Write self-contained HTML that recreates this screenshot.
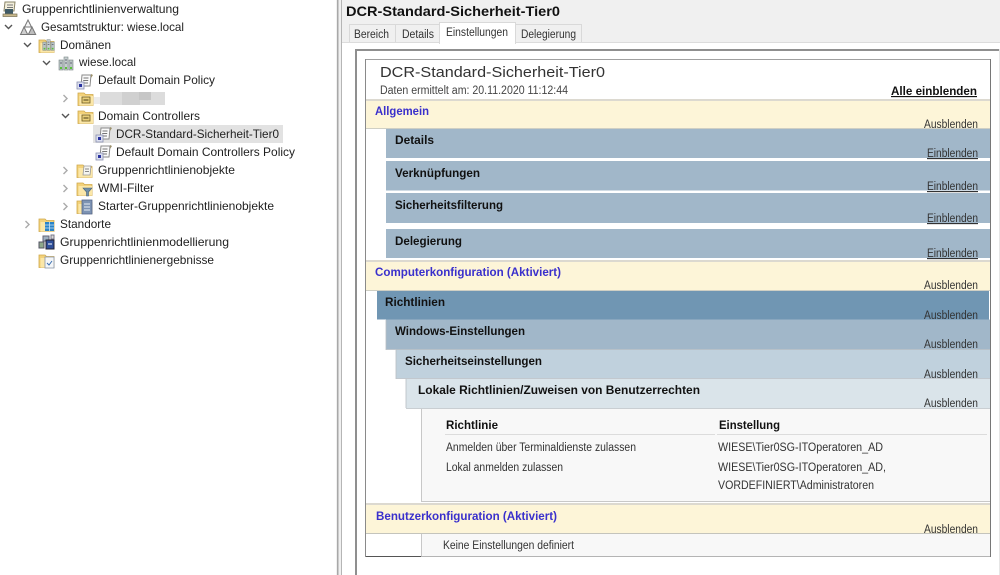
<!DOCTYPE html>
<html lang="de"><head><meta charset="utf-8"><title>Gruppenrichtlinienverwaltung</title>
<style>
html,body{margin:0;padding:0;background:#fff;width:1000px;height:575px;overflow:hidden}
svg{display:block;filter:blur(.3px)}
text{font-family:"Liberation Sans",sans-serif;font-size:12px;fill:#222;white-space:pre}
.t{font-size:12px;fill:#1f1f1f}
.b{font-weight:bold;fill:#111}
.h{font-weight:bold;fill:#3a30cc}
.s{font-size:11.5px;fill:#333}
.ch{fill:none;stroke-width:1.4}
</style></head><body>
<svg width="1000" height="575" viewBox="0 0 1000 575" xmlns="http://www.w3.org/2000/svg">
<defs>
<g id="folder"><path d="M0 3h6l1.500 1.500H15v11H0z" fill="#f3d27a" stroke="#cfa84a" stroke-width=".8"/><path d="M1.500 6H15v9.500H1.500z" fill="#fbe7a8"/></g>
<g id="gpo"><path d="M5 2h9l-1 11H4z" fill="#fafafa" stroke="#8a8a8a" stroke-width="1"/><path d="M6.500 5h5M6.200 7.500h5M6 10h5" stroke="#777" stroke-width="1"/><path d="M14 1l2 1-2 3z" fill="#9a8f6a"/><rect x="0" y="9" width="7" height="7" fill="#dcdff0" stroke="#8a90b0" stroke-width=".8"/><rect x="2" y="11" width="3" height="3" fill="#2a34a0"/></g>
<g id="ou"><use href="#folder"/><rect x="4" y="7" width="8" height="6" fill="#e9cf7a" stroke="#6c5a20" stroke-width=".8"/><path d="M5.500 10h5" stroke="#4a3f18"/></g>
<g id="srv"><rect x="1" y="5" width="4" height="10" fill="#b9c4c4" stroke="#7a8686" stroke-width=".6"/><rect x="6" y="2" width="4" height="13" fill="#c6cfcf" stroke="#7a8686" stroke-width=".6"/><rect x="11" y="5" width="4" height="10" fill="#b9c4c4" stroke="#7a8686" stroke-width=".6"/><path d="M2 8h2M7 5h2M12 8h2M7 8h2" stroke="#667"/><rect x="2" y="12" width="2" height="2" fill="#5bbf3a"/><rect x="7" y="12" width="2" height="2" fill="#5bbf3a"/><rect x="12" y="12" width="2" height="2" fill="#5bbf3a"/></g>
</defs>

<rect width="1000" height="575" fill="#fff"/>
<!-- divider -->
<rect x="336" y="0" width="6" height="575" fill="#f0f0f0"/>
<rect x="337" y="0" width="1.500" height="575" fill="#a8a8a8"/>
<rect x="341" y="0" width="1" height="575" fill="#b5b5b5"/>

<!-- tree selection -->
<rect x="93" y="125" width="190" height="18" fill="#e2e2e2"/>
<!-- blurred label -->
<rect x="94" y="97" width="8" height="7" fill="#ececec"/>
<rect x="100" y="92" width="65" height="13" fill="#dcdcdc"/>
<rect x="122" y="92" width="18" height="13" fill="#d0d0d0"/>
<rect x="139" y="92" width="12" height="8" fill="#c6c6c6"/>

<!-- chevrons -->
<g class="ch" stroke="#555">
<path class="ch" d="M5 25l3.500 3.500L12 25M24 43l3.500 3.500L31 43M43 61l3.500 3.500L50 61M62 114l3.500 3.500L69 114" stroke="#555"/>
<path class="ch" d="M63.500 95l3.500 3.500-3.500 3.500M63.500 167l3.500 3.500-3.500 3.500M63.500 185l3.500 3.500-3.500 3.500M63.500 203l3.500 3.500-3.500 3.500M25.500 221l3.500 3.500-3.500 3.500" stroke="#aaa"/>
</g>

<!-- tree icons -->
<g transform="translate(2,1)"><path d="M3 1h10l-1 9H2z" fill="#f3efdc" stroke="#8a8468"/><path d="M5 4h6M5 6.500h6" stroke="#777"/><rect x="3" y="8" width="8" height="5" fill="#3f5a66"/><path d="M1 13h14v2.500H1z" fill="#c9b98c" stroke="#7c7458" stroke-width=".7"/></g>
<g transform="translate(20,19)" fill="#cfcfcf" stroke="#777" stroke-width="1"><path d="M8 1l3.500 7h-7z" fill="#f4f4f4"/><path d="M4 8l3.700 7.500H.5z"/><path d="M12 8l3.700 7.500H8.300z" fill="#bdbdbd"/></g>
<g transform="translate(39,37)"><use href="#folder"/><g transform="translate(3,1) scale(.82)"><use href="#srv"/></g></g>
<g transform="translate(58,55)"><use href="#srv"/></g>
<use href="#gpo" x="77" y="73"/>
<use href="#ou" x="78" y="90"/>
<use href="#ou" x="78" y="108"/>
<use href="#gpo" x="96" y="126"/>
<use href="#gpo" x="96" y="144"/>
<g transform="translate(77,162)"><use href="#folder"/><path d="M7 4h7l-1 9H6z" fill="#f5f5f0" stroke="#999" stroke-width=".8"/><path d="M8 7h4M8 9.500h4" stroke="#888"/></g>
<g transform="translate(77,180)"><use href="#folder"/><path d="M6 8h9l-3.500 4v4h-2v-4z" fill="#6f8fa8" stroke="#4a6478" stroke-width=".6"/></g>
<g transform="translate(77,198)"><use href="#folder"/><rect x="5" y="2" width="10" height="14" fill="#7d93b3" stroke="#56678a" stroke-width=".8"/><path d="M7 6h6M7 9h6M7 12h6" stroke="#e8edf4"/></g>
<g transform="translate(39,216)"><use href="#folder"/><rect x="6" y="6" width="9" height="9" fill="#2a83c7"/><path d="M6 9h9M6 12h9M10.500 6v9" stroke="#cfe6f6" stroke-width=".8"/></g>
<g transform="translate(39,234)"><rect x="4" y="2" width="6" height="5" fill="#9fb0c0" stroke="#667"/><rect x="0" y="8" width="5" height="6" fill="#8ea88a" stroke="#556"/><rect x="7" y="6" width="8" height="9" fill="#2e4f9a" stroke="#223"/><path d="M9 10h4" stroke="#fff"/><path d="M12 1h3v4h-3z" fill="#d8d8d8" stroke="#778"/></g>
<g transform="translate(39,252)"><use href="#folder"/><rect x="6" y="5" width="9" height="11" fill="#f4f6f8" stroke="#8a96a8" stroke-width=".8"/><path d="M8 11l2 2 3-4" stroke="#3a6fb0" fill="none"/></g>

<!-- tree labels -->
<g class="tree">
<text class="t" x="22" y="13" textLength="157" lengthAdjust="spacingAndGlyphs">Gruppenrichtlinienverwaltung</text>
<text class="t" x="41" y="31" textLength="143" lengthAdjust="spacingAndGlyphs">Gesamtstruktur: wiese.local</text>
<text class="t" x="60" y="49" textLength="51" lengthAdjust="spacingAndGlyphs">Domänen</text>
<text class="t" x="79" y="66" textLength="57" lengthAdjust="spacingAndGlyphs">wiese.local</text>
<text class="t" x="98" y="84" textLength="117" lengthAdjust="spacingAndGlyphs">Default Domain Policy</text>
<text class="t" x="98" y="120" textLength="102" lengthAdjust="spacingAndGlyphs">Domain Controllers</text>
<text class="t" x="116" y="138" textLength="163" lengthAdjust="spacingAndGlyphs">DCR-Standard-Sicherheit-Tier0</text>
<text class="t" x="116" y="156" textLength="179" lengthAdjust="spacingAndGlyphs">Default Domain Controllers Policy</text>
<text class="t" x="98" y="174" textLength="137" lengthAdjust="spacingAndGlyphs">Gruppenrichtlinienobjekte</text>
<text class="t" x="98" y="192" textLength="56" lengthAdjust="spacingAndGlyphs">WMI-Filter</text>
<text class="t" x="98" y="210" textLength="176" lengthAdjust="spacingAndGlyphs">Starter-Gruppenrichtlinienobjekte</text>
<text class="t" x="60" y="228" textLength="51" lengthAdjust="spacingAndGlyphs">Standorte</text>
<text class="t" x="60" y="246" textLength="169" lengthAdjust="spacingAndGlyphs">Gruppenrichtlinienmodellierung</text>
<text class="t" x="60" y="264" textLength="154" lengthAdjust="spacingAndGlyphs">Gruppenrichtlinienergebnisse</text>
</g>

<!-- right pane header -->
<rect x="342" y="0" width="658" height="43" fill="#f0f0f0"/>
<text x="346" y="16" class="b" style="font-size:14px" textLength="214" lengthAdjust="spacingAndGlyphs">DCR-Standard-Sicherheit-Tier0</text>

<!-- tabs -->
<rect x="349.500" y="24.500" width="46" height="19" fill="#f0f0f0" stroke="#d9d9d9"/>
<rect x="395.500" y="24.500" width="44" height="19" fill="#f0f0f0" stroke="#d9d9d9"/>
<rect x="515.500" y="24.500" width="66" height="19" fill="#f0f0f0" stroke="#d9d9d9"/>
<rect x="342" y="42" width="658" height="533" fill="#fff"/>
<rect x="342" y="42" width="658" height="1" fill="#dcdcdc"/>
<rect x="439.500" y="22.500" width="76" height="21" fill="#fff" stroke="#d9d9d9"/>
<rect x="440" y="41" width="75" height="3" fill="#fff"/>
<text class="s" x="354" y="38" textLength="35" lengthAdjust="spacingAndGlyphs">Bereich</text>
<text class="s" x="402" y="38" textLength="32" lengthAdjust="spacingAndGlyphs">Details</text>
<text class="s" x="446" y="36" textLength="62" lengthAdjust="spacingAndGlyphs">Einstellungen</text>
<text class="s" x="521" y="38" textLength="55" lengthAdjust="spacingAndGlyphs">Delegierung</text>

<!-- browser frame -->
<rect x="355" y="49" width="645" height="2" fill="#8f8f8f"/>
<rect x="355" y="49" width="2" height="526" fill="#8f8f8f"/>
<rect x="999" y="49" width="1" height="526" fill="#e6e6e6"/>

<!-- report box -->
<rect x="365.500" y="59.500" width="625" height="497" fill="#fff" stroke="#8a8a8a"/>
<rect x="366" y="59" width="624" height="1" fill="#a0a0a0"/>
<text x="380" y="77" style="font-size:14.500px;fill:#333" textLength="225" lengthAdjust="spacingAndGlyphs">DCR-Standard-Sicherheit-Tier0</text>
<text class="s" x="380" y="94" textLength="188" lengthAdjust="spacingAndGlyphs" style="fill:#444">Daten ermittelt am: 20.11.2020 11:12:44</text>
<text class="b" x="891" y="95" style="font-size:11.500px" textLength="86" lengthAdjust="spacingAndGlyphs" text-decoration="underline">Alle einblenden</text>
<rect x="366" y="99" width="624" height="2" fill="#dcd9d0"/>

<!-- section bars -->
<rect x="366" y="101" width="624" height="27" fill="#fdf5d8"/>
<rect x="366" y="128" width="624" height="1" fill="#cfcfc4"/>
<rect x="386" y="129" width="604" height="29" fill="#a1b7c9"/>
<rect x="386" y="161" width="604" height="29.500" fill="#a1b7c9"/>
<rect x="386" y="193" width="604" height="30" fill="#a1b7c9"/>
<rect x="386" y="229" width="604" height="29" fill="#a1b7c9"/>
<rect x="366" y="260" width="624" height="2" fill="#dcd9d0"/>
<rect x="366" y="262" width="624" height="28" fill="#fdf5d8"/>
<rect x="366" y="290" width="624" height="1" fill="#cfcfc4"/>
<rect x="377" y="291" width="612" height="28.500" fill="#7096b3"/>
<rect x="386" y="319.500" width="604" height="30" fill="#a1b7c9"/>
<rect x="396" y="349.500" width="594" height="29" fill="#c0d1dd"/>
<rect x="406" y="379" width="584" height="29" fill="#dae4ea"/>
<path d="M386 320v30M396 350v29M406 379v29M386 349.500H990M396 378.500H990M406 408.500H990" stroke="#b8bec4" fill="none" stroke-width=".8"/>
<rect x="421" y="409" width="569" height="92" fill="#f8f8f8"/>
<rect x="421" y="409" width="1" height="92" fill="#c8c8c8"/>
<rect x="421" y="501" width="569" height="1" fill="#c8c8c8"/>
<rect x="366" y="503" width="624" height="2" fill="#dcd9d0"/>
<rect x="366" y="505" width="624" height="28" fill="#fdf5d8"/>
<rect x="366" y="533" width="624" height="1" fill="#c4c4bc"/>
<rect x="421" y="534" width="569" height="22" fill="#f8f8f8"/>
<rect x="421" y="534" width="1" height="22" fill="#c8c8c8"/>
<rect x="366" y="556" width="55" height="1" fill="#555"/>
<rect x="421" y="556" width="570" height="1" fill="#b4b4b4"/>
<rect x="990" y="59" width="1" height="498" fill="#777"/>

<!-- headings -->
<text class="h" x="375" y="115" style="font-size:11.500px" textLength="54" lengthAdjust="spacingAndGlyphs">Allgemein</text>
<text class="b" x="395" y="144" style="font-size:11.500px" textLength="39" lengthAdjust="spacingAndGlyphs">Details</text>
<text class="b" x="395" y="177" style="font-size:11.500px" textLength="85" lengthAdjust="spacingAndGlyphs">Verknüpfungen</text>
<text class="b" x="395" y="209" style="font-size:11.500px" textLength="108" lengthAdjust="spacingAndGlyphs">Sicherheitsfilterung</text>
<text class="b" x="395" y="245" style="font-size:11.500px" textLength="67" lengthAdjust="spacingAndGlyphs">Delegierung</text>
<text class="h" x="375" y="276" style="font-size:11.500px" textLength="186" lengthAdjust="spacingAndGlyphs">Computerkonfiguration (Aktiviert)</text>
<text class="b" x="385" y="306" style="font-size:11.500px" textLength="60" lengthAdjust="spacingAndGlyphs">Richtlinien</text>
<text class="b" x="395" y="335" style="font-size:11.500px" textLength="130" lengthAdjust="spacingAndGlyphs">Windows-Einstellungen</text>
<text class="b" x="405" y="365" style="font-size:11.500px" textLength="137" lengthAdjust="spacingAndGlyphs">Sicherheitseinstellungen</text>
<text class="b" x="418" y="394" style="font-size:11.500px" textLength="282" lengthAdjust="spacingAndGlyphs">Lokale Richtlinien/Zuweisen von Benutzerrechten</text>
<text class="h" x="376" y="520" style="font-size:11.500px" textLength="181" lengthAdjust="spacingAndGlyphs">Benutzerkonfiguration (Aktiviert)</text>

<!-- Ausblenden / Einblenden -->
<g class="s">
<text class="s" x="924" y="128" textLength="54" lengthAdjust="spacingAndGlyphs">Ausblenden</text>
<text class="s" x="924" y="289" textLength="54" lengthAdjust="spacingAndGlyphs">Ausblenden</text>
<text class="s" x="924" y="319" textLength="54" lengthAdjust="spacingAndGlyphs">Ausblenden</text>
<text class="s" x="924" y="348" textLength="54" lengthAdjust="spacingAndGlyphs">Ausblenden</text>
<text class="s" x="924" y="378" textLength="54" lengthAdjust="spacingAndGlyphs">Ausblenden</text>
<text class="s" x="924" y="407" textLength="54" lengthAdjust="spacingAndGlyphs">Ausblenden</text>
<text class="s" x="924" y="533" textLength="54" lengthAdjust="spacingAndGlyphs">Ausblenden</text>
<text class="s" x="927" y="157" textLength="51" lengthAdjust="spacingAndGlyphs" text-decoration="underline">Einblenden</text>
<text class="s" x="927" y="190" textLength="51" lengthAdjust="spacingAndGlyphs" text-decoration="underline">Einblenden</text>
<text class="s" x="927" y="222" textLength="51" lengthAdjust="spacingAndGlyphs" text-decoration="underline">Einblenden</text>
<text class="s" x="927" y="257" textLength="51" lengthAdjust="spacingAndGlyphs" text-decoration="underline">Einblenden</text>
</g>

<!-- table -->
<text class="b" x="446" y="429" style="font-size:11.500px" textLength="52" lengthAdjust="spacingAndGlyphs">Richtlinie</text>
<text class="b" x="719" y="429" style="font-size:11.500px" textLength="61" lengthAdjust="spacingAndGlyphs">Einstellung</text>
<rect x="445" y="434" width="270" height="1" fill="#dcdcdc"/>
<rect x="717" y="434" width="270" height="1" fill="#dcdcdc"/>
<text class="s" x="446" y="451" textLength="190" lengthAdjust="spacingAndGlyphs">Anmelden über Terminaldienste zulassen</text>
<text class="s" x="446" y="471" textLength="117" lengthAdjust="spacingAndGlyphs">Lokal anmelden zulassen</text>
<text class="s" x="718" y="451" textLength="165" lengthAdjust="spacingAndGlyphs">WIESE\Tier0SG-ITOperatoren_AD</text>
<text class="s" x="718" y="471" textLength="168" lengthAdjust="spacingAndGlyphs">WIESE\Tier0SG-ITOperatoren_AD,</text>
<text class="s" x="718" y="489" textLength="156" lengthAdjust="spacingAndGlyphs">VORDEFINIERT\Administratoren</text>
<text class="s" x="443" y="549" textLength="131" lengthAdjust="spacingAndGlyphs">Keine Einstellungen definiert</text>
</svg>
</body></html>
